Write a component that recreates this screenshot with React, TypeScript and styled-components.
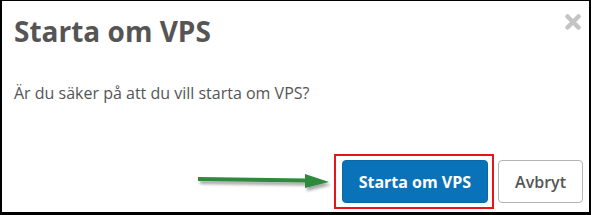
import React from "react";
import styled, { createGlobalStyle } from "styled-components";

const Global = createGlobalStyle`
  html, body { margin: 0; padding: 0; background: #ffffff; }
  * { box-sizing: border-box; }
`;

const Frame = styled.div`
  position: relative;
  width: 591px;
  height: 215px;
  border-style: solid;
  border-color: #000;
  border-width: 1px 2px 3px 2px;
  background: #fff;
  font-family: "Open Sans", "Liberation Sans", sans-serif;
`;

const Modal = styled.div`
  display: flex;
  flex-direction: column;
  height: 100%;
`;

const Header = styled.div`
  display: flex;
  justify-content: space-between;
  align-items: flex-start;
  padding: 12px 8px 0 12px;
`;

const Title = styled.h1`
  margin: 0;
  font-size: 28px;
  line-height: 36px;
  font-weight: 700;
  color: #555555;
`;

const Close = styled.button`
  display: flex;
  border: 0;
  background: transparent;
  padding: 0;
  margin-top: 1px;
  cursor: pointer;
`;

const Body = styled.p`
  margin: 0;
  padding: 34px 12px 0 12px;
  font-size: 16px;
  line-height: 20px;
  color: #555555;
`;

const Footer = styled.div`
  margin-top: auto;
  display: flex;
  justify-content: flex-end;
  align-items: center;
  gap: 4px;
  padding: 0 6px 3px 0;
`;

const Highlight = styled.div`
  display: flex;
  border: 2px solid #e8141b;
  padding: 4px 4px 4px 6px;
`;

const Button = styled.button<{ $primary?: boolean }>`
  height: 43px;
  border-radius: 4px;
  font-family: "Open Sans", "Liberation Sans", sans-serif;
  font-size: 16px;
  font-weight: ${(p) => (p.$primary ? 700 : 600)};
  padding: 0 16px;
  color: ${(p) => (p.$primary ? "#ffffff" : "#555555")};
  background: ${(p) => (p.$primary ? "#0a72b9" : "#ffffff")};
  border: 1px solid ${(p) => (p.$primary ? "#0a68a8" : "#b3b3b3")};
  cursor: pointer;
`;

const Arrow = styled.svg`
  position: absolute;
  left: 190px;
  top: 166px;
  overflow: visible;
`;

export default function App() {
  return (
    <>
      <Global />
      <Frame>
        <Modal>
          <Header>
            <Title>Starta om VPS</Title>
            <Close aria-label="Stäng">
              <svg width="16" height="16" viewBox="0 0 16 16">
                <path d="M2.5 2.5 L13.5 13.5 M13.5 2.5 L2.5 13.5" stroke="#c4c4c4" strokeWidth="4.5" strokeLinecap="round" />
              </svg>
            </Close>
          </Header>
          <Body>Är du säker på att du vill starta om VPS?</Body>
          <Footer>
            <Highlight>
              <Button $primary>Starta om VPS</Button>
            </Highlight>
            <Button>Avbryt</Button>
          </Footer>
        </Modal>
        <Arrow width="140" height="30" viewBox="0 0 140 30">
          <defs>
            <filter id="sh" x="-10%" y="-50%" width="130%" height="250%">
              <feDropShadow dx="2" dy="3" stdDeviation="1.5" floodColor="#000" floodOpacity="0.35" />
            </filter>
          </defs>
          <g filter="url(#sh)">
            <path d="M6 12 L114 13.5" stroke="#2d8a3c" strokeWidth="4" />
            <path d="M113 7 L137 15 L113 21 Z" fill="#2d8a3c" />
          </g>
        </Arrow>
      </Frame>
    </>
  );
}
